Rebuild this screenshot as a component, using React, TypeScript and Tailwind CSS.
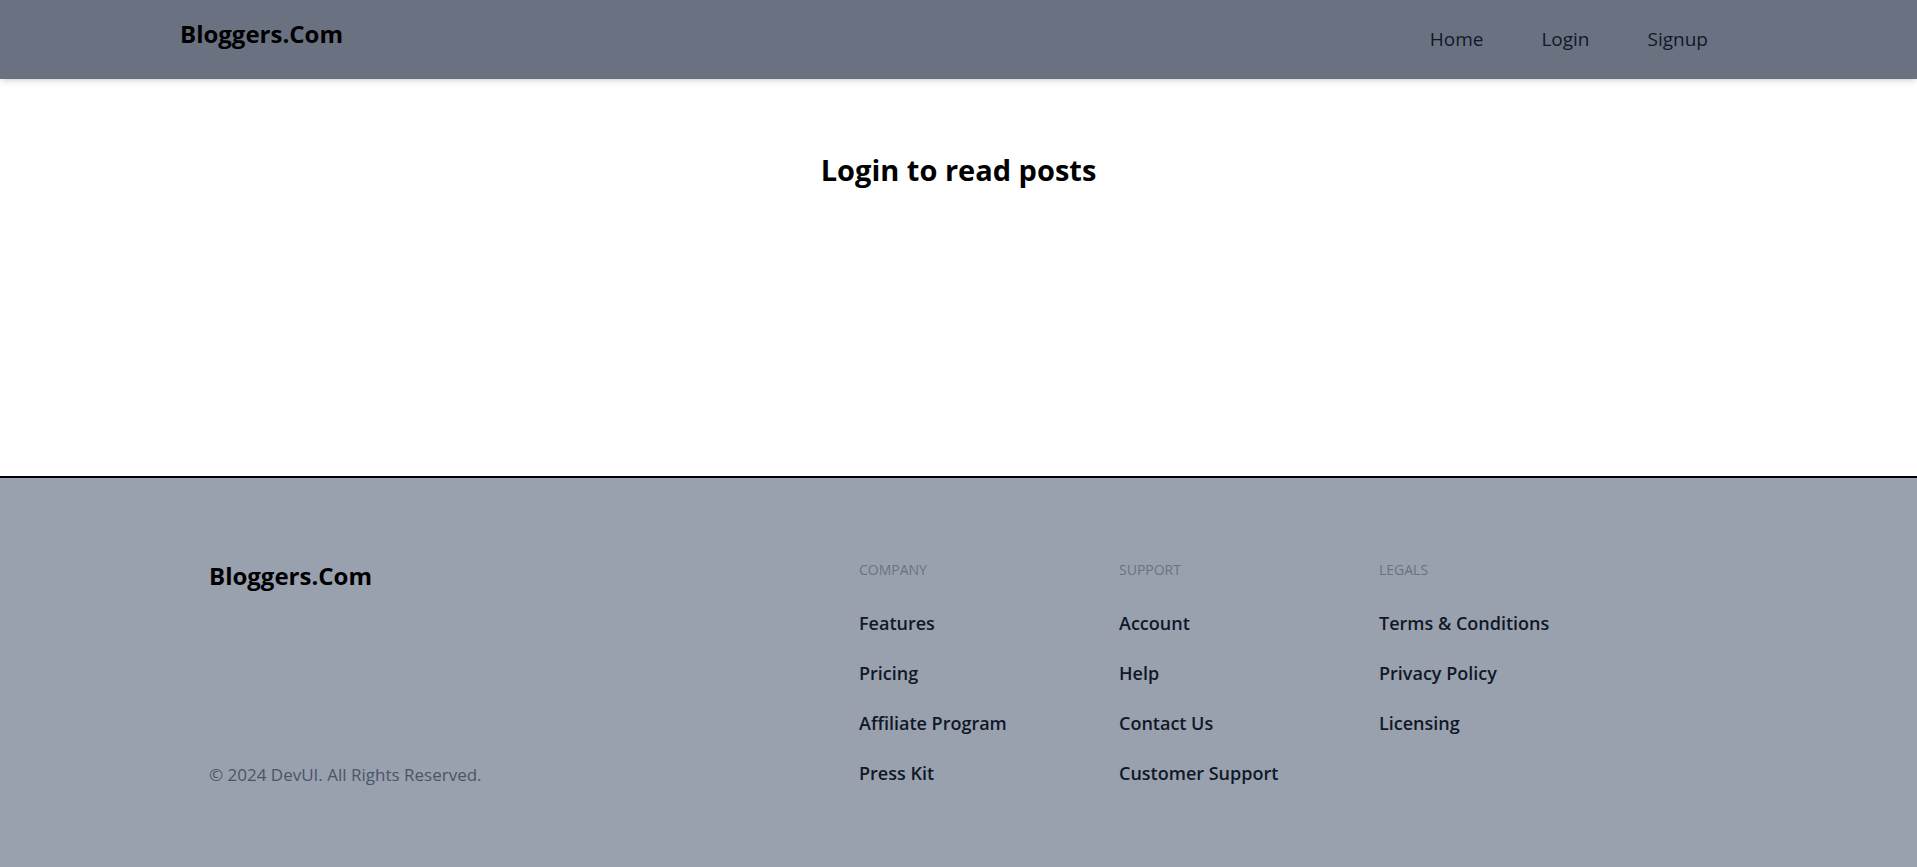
import React from "react";

const company = ["Features", "Pricing", "Affiliate Program", "Press Kit"];
const support = ["Account", "Help", "Contact Us", "Customer Support"];
const legals = ["Terms & Conditions", "Privacy Policy", "Licensing"];

function Col({ title, items }: { title: string; items: string[] }) {
  return (
    <div className="w-[260px] flex flex-col">
      <h3 className="text-sm font-medium uppercase text-gray-500 leading-5">{title}</h3>
      <ul className="mt-[29px] flex flex-col gap-[22px]">
        {items.map((i) => (
          <li key={i} className="text-lg font-semibold text-gray-900 leading-7">
            {i}
          </li>
        ))}
      </ul>
    </div>
  );
}

export default function App() {
  return (
    <div className="min-h-screen bg-white font-['Open_Sans',sans-serif]">
      <header className="h-[79px] bg-gray-500 shadow-md flex items-center justify-between px-[180px] relative z-10">
        <div className="text-2xl font-bold text-black -mt-[12px]">Bloggers.Com</div>
        <nav className="flex items-center">
          {["Home", "Login", "Signup"].map((l) => (
            <a key={l} className="px-[29px] text-[19px] text-gray-900">
              {l}
            </a>
          ))}
        </nav>
      </header>
      <main className="h-[397px] pt-[73px] flex justify-center">
        <h1 className="text-[29px] font-bold text-black leading-9">Login to read posts</h1>
      </main>
      <footer className="border-t-2 border-black bg-gray-400 px-[209px] pt-[82px] pb-[110px] flex">
        <div className="w-[650px] flex flex-col justify-between">
          <div className="text-2xl font-bold text-black">Bloggers.Com</div>
          <p className="text-[17px] text-gray-600">© 2024 DevUI. All Rights Reserved.</p>
        </div>
        <Col title="Company" items={company} />
        <Col title="Support" items={support} />
        <Col title="Legals" items={legals} />
      </footer>
    </div>
  );
}
